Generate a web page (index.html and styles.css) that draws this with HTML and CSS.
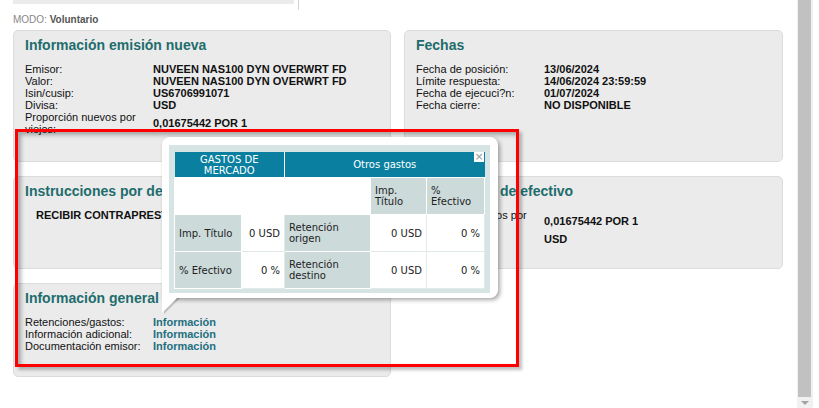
FILE: index.html
```html
<!DOCTYPE html>
<html lang="es">
<head>
    <meta charset="UTF-8">
    <meta name="viewport" content="width=device-width, initial-scale=1.0">
    <title>Evento corporativo</title>
    <link rel="stylesheet" href="styles.css">
</head>
<body>
    <div class="page">
        <div class="tabs-strip">
            <div class="tab-bar"></div>
            <div class="tab-sep"></div>
        </div>

        <p class="mode">MODO: <b>Voluntario</b></p>

        <div class="cards">
            <section class="card">
                <h2>Información emisión nueva</h2>
                <table class="info">
                    <tr><td>Emisor:</td><td>NUVEEN NAS100 DYN OVERWRT FD</td></tr>
                    <tr><td>Valor:</td><td>NUVEEN NAS100 DYN OVERWRT FD</td></tr>
                    <tr><td>Isin/cusip:</td><td>US6706991071</td></tr>
                    <tr><td>Divisa:</td><td>USD</td></tr>
                    <tr><td>Proporción nuevos por viejos:</td><td>0,01675442 POR 1</td></tr>
                </table>
            </section>

            <section class="card">
                <h2>Fechas</h2>
                <table class="info">
                    <tr><td>Fecha de posición:</td><td>13/06/2024</td></tr>
                    <tr><td>Límite respuesta:</td><td>14/06/2024 23:59:59</td></tr>
                    <tr><td>Fecha de ejecuci?n:</td><td>01/07/2024</td></tr>
                    <tr><td>Fecha cierre:</td><td>NO DISPONIBLE</td></tr>
                </table>
            </section>

            <section class="card">
                <h2>Instrucciones por defecto</h2>
                <p class="instr">RECIBIR CONTRAPRESTACIÓN EN EFECTIVO</p>
            </section>

            <section class="card">
                <h2>Información de efectivo</h2>
                <table class="info">
                    <tr><td>Proporción nuevos por viejos:</td><td>0,01675442 POR 1</td></tr>
                    <tr class="tall"><td>Divisa:</td><td>USD</td></tr>
                </table>
            </section>

            <section class="card">
                <h2>Información general</h2>
                <table class="info">
                    <tr><td>Retenciones/gastos:</td><td><a href="#">Información</a></td></tr>
                    <tr><td>Información adicional:</td><td><a href="#">Información</a></td></tr>
                    <tr><td>Documentación emisor:</td><td><a href="#">Información</a></td></tr>
                </table>
            </section>
        </div>

        <!-- annotation frame drawn over the page -->
        <div class="highlight"></div>

        <!-- tooltip for Retenciones/gastos -->
        <div class="popup">
            <div class="popup-panel">
                <table class="fees">
                    <colgroup>
                        <col style="width:67px">
                        <col style="width:43px">
                        <col style="width:86px">
                        <col style="width:56px">
                        <col style="width:58px">
                    </colgroup>
                    <tr class="head">
                        <th colspan="2">GASTOS DE<br>MERCADO</th>
                        <th colspan="3">Otros gastos</th>
                    </tr>
                    <tr>
                        <td class="blank"></td>
                        <td class="blank"></td>
                        <td class="blank"></td>
                        <td class="lbl">Imp.<br>Título</td>
                        <td class="lbl">%<br>Efectivo</td>
                    </tr>
                    <tr>
                        <td class="lbl">Imp. Título</td>
                        <td class="num">0 USD</td>
                        <td class="lbl">Retención<br>origen</td>
                        <td class="num">0 USD</td>
                        <td class="num">0 %</td>
                    </tr>
                    <tr>
                        <td class="lbl">% Efectivo</td>
                        <td class="num">0 %</td>
                        <td class="lbl">Retención<br>destino</td>
                        <td class="num">0 USD</td>
                        <td class="num">0 %</td>
                    </tr>
                </table>
            </div>
            <span class="popup-close">×</span>
            <svg class="popup-tail" width="22" height="20" viewBox="0 0 22 20">
                <polygon points="3,1 19,1 3,17" fill="rgba(0,0,0,0.18)"/>
                <polygon points="1,0 17,0 1,16" fill="#fff"/>
            </svg>
        </div>
    </div>

    <div class="scrollbar">
        <div class="scroll-thumb"></div>
        <div class="scroll-arrow"></div>
    </div>
</body>
</html>
```

FILE: styles.css
```css
/* General Styles */
body {
    margin: 0;
    padding: 0;
    background-color: #fff;
    font-family: "Liberation Sans", Arial, sans-serif;
    color: #111;
    display: flex;
}
.page {
    position: relative;
    width: 797px;
    height: 408px;
    padding: 0 14px 0 13px;
    box-sizing: border-box;
    overflow: hidden;
}

/* tab strip at the very top */
.tabs-strip {
    display: flex;
    height: 10px;
}
.tab-bar {
    width: 281px;
    height: 4px;
    background-color: #ebebeb;
}
.tab-sep {
    width: 1px;
    height: 10px;
    margin-left: 4px;
    background-color: #d4d4d4;
}

.mode {
    margin: 4px 0;
    font-size: 10px;
    line-height: 12px;
    color: #888;
}
.mode b {
    color: #555;
}

/* cards */
.cards {
    display: grid;
    grid-template-columns: 378px 379px;
    grid-template-rows: 132px 93px 94px;
    column-gap: 13px;
    row-gap: 14px;
}
.card {
    background-color: #ebebeb;
    border: 1px solid #dcdcdc;
    border-radius: 5px;
    padding: 6px 11px 0;
    box-sizing: border-box;
    overflow: hidden;
}
.card h2 {
    margin: 0 0 9px;
    font-size: 14px;
    line-height: 17px;
    font-weight: bold;
    color: #1e6d6d;
    white-space: nowrap;
}
.info {
    border-collapse: collapse;
    table-layout: fixed;
    font-size: 11px;
    line-height: 12px;
}
.info td {
    padding: 0;
    vertical-align: middle;
}
.info td:first-child {
    width: 128px;
}
.info td:last-child {
    font-weight: bold;
    white-space: nowrap;
}
.info .tall td {
    padding-top: 0;
}
.info a {
    color: #22707f;
    text-decoration: none;
}
.instr {
    margin: 0;
    padding-left: 11px;
    font-size: 11px;
    line-height: 12px;
    font-weight: bold;
    white-space: nowrap;
}

/* red annotation frame */
.highlight {
    position: absolute;
    left: 15px;
    top: 129px;
    width: 504px;
    height: 238px;
    box-sizing: border-box;
    border: 3px solid #ff0000;
    box-shadow: 3px 3px 3px rgba(0, 0, 0, 0.25), inset 3px 3px 4px rgba(0, 0, 0, 0.3);
}

/* tooltip */
.popup {
    position: absolute;
    left: 162px;
    top: 137px;
    width: 336px;
    height: 161px;
    box-sizing: border-box;
    padding: 8px 8px 5px 7px;
    background-color: #fff;
    border-radius: 8px 8px 8px 0;
    box-shadow: 2px 2px 4px rgba(0, 0, 0, 0.35);
    z-index: 10;
}
.popup-panel {
    background-color: #d6e4e4;
    padding: 7px 6px 5px 5px;
    height: 148px;
    box-sizing: border-box;
}
.fees {
    width: 310px;
    border-collapse: collapse;
    table-layout: fixed;
    font-family: "DejaVu Sans", Verdana, sans-serif;
    font-size: 10px;
    line-height: 11px;
    color: #222;
}
.fees th {
    height: 25px;
    padding: 0;
    background-color: #0a7fa0;
    color: #fff;
    font-weight: normal;
    text-align: center;
    border-left: 1px solid #fff;
}
.fees th:first-child {
    border-left: none;
}
.fees td {
    height: 37px;
    padding: 0 4px;
    background-color: #fff;
    border: 1px solid #e2e9e9;
    box-sizing: border-box;
}
.fees td.blank {
    border-color: #fff;
}
.fees td.lbl {
    background-color: #ccdada;
    border-color: #fff;
    text-align: left;
}
.fees td.num {
    text-align: right;
    white-space: nowrap;
}
.popup-close {
    position: absolute;
    left: 312px;
    top: 15px;
    width: 10px;
    height: 10px;
    background-color: #fff;
    color: #999;
    font-family: "DejaVu Sans", sans-serif;
    font-size: 11px;
    line-height: 10px;
    text-align: center;
}
.popup-tail {
    position: absolute;
    left: -1px;
    top: 160px;
}

/* fake scrollbar of the frame */
.scrollbar {
    position: relative;
    width: 16px;
    height: 408px;
    background-color: #f1f1f1;
}
.scroll-thumb {
    margin: 0 2px 0 1px;
    height: 397px;
    background-color: #c1c1c1;
}
.scroll-arrow {
    position: absolute;
    left: 4px;
    bottom: 3px;
    width: 0;
    height: 0;
    border-left: 4px solid transparent;
    border-right: 4px solid transparent;
    border-top: 4px solid #a3a3a3;
}
```
